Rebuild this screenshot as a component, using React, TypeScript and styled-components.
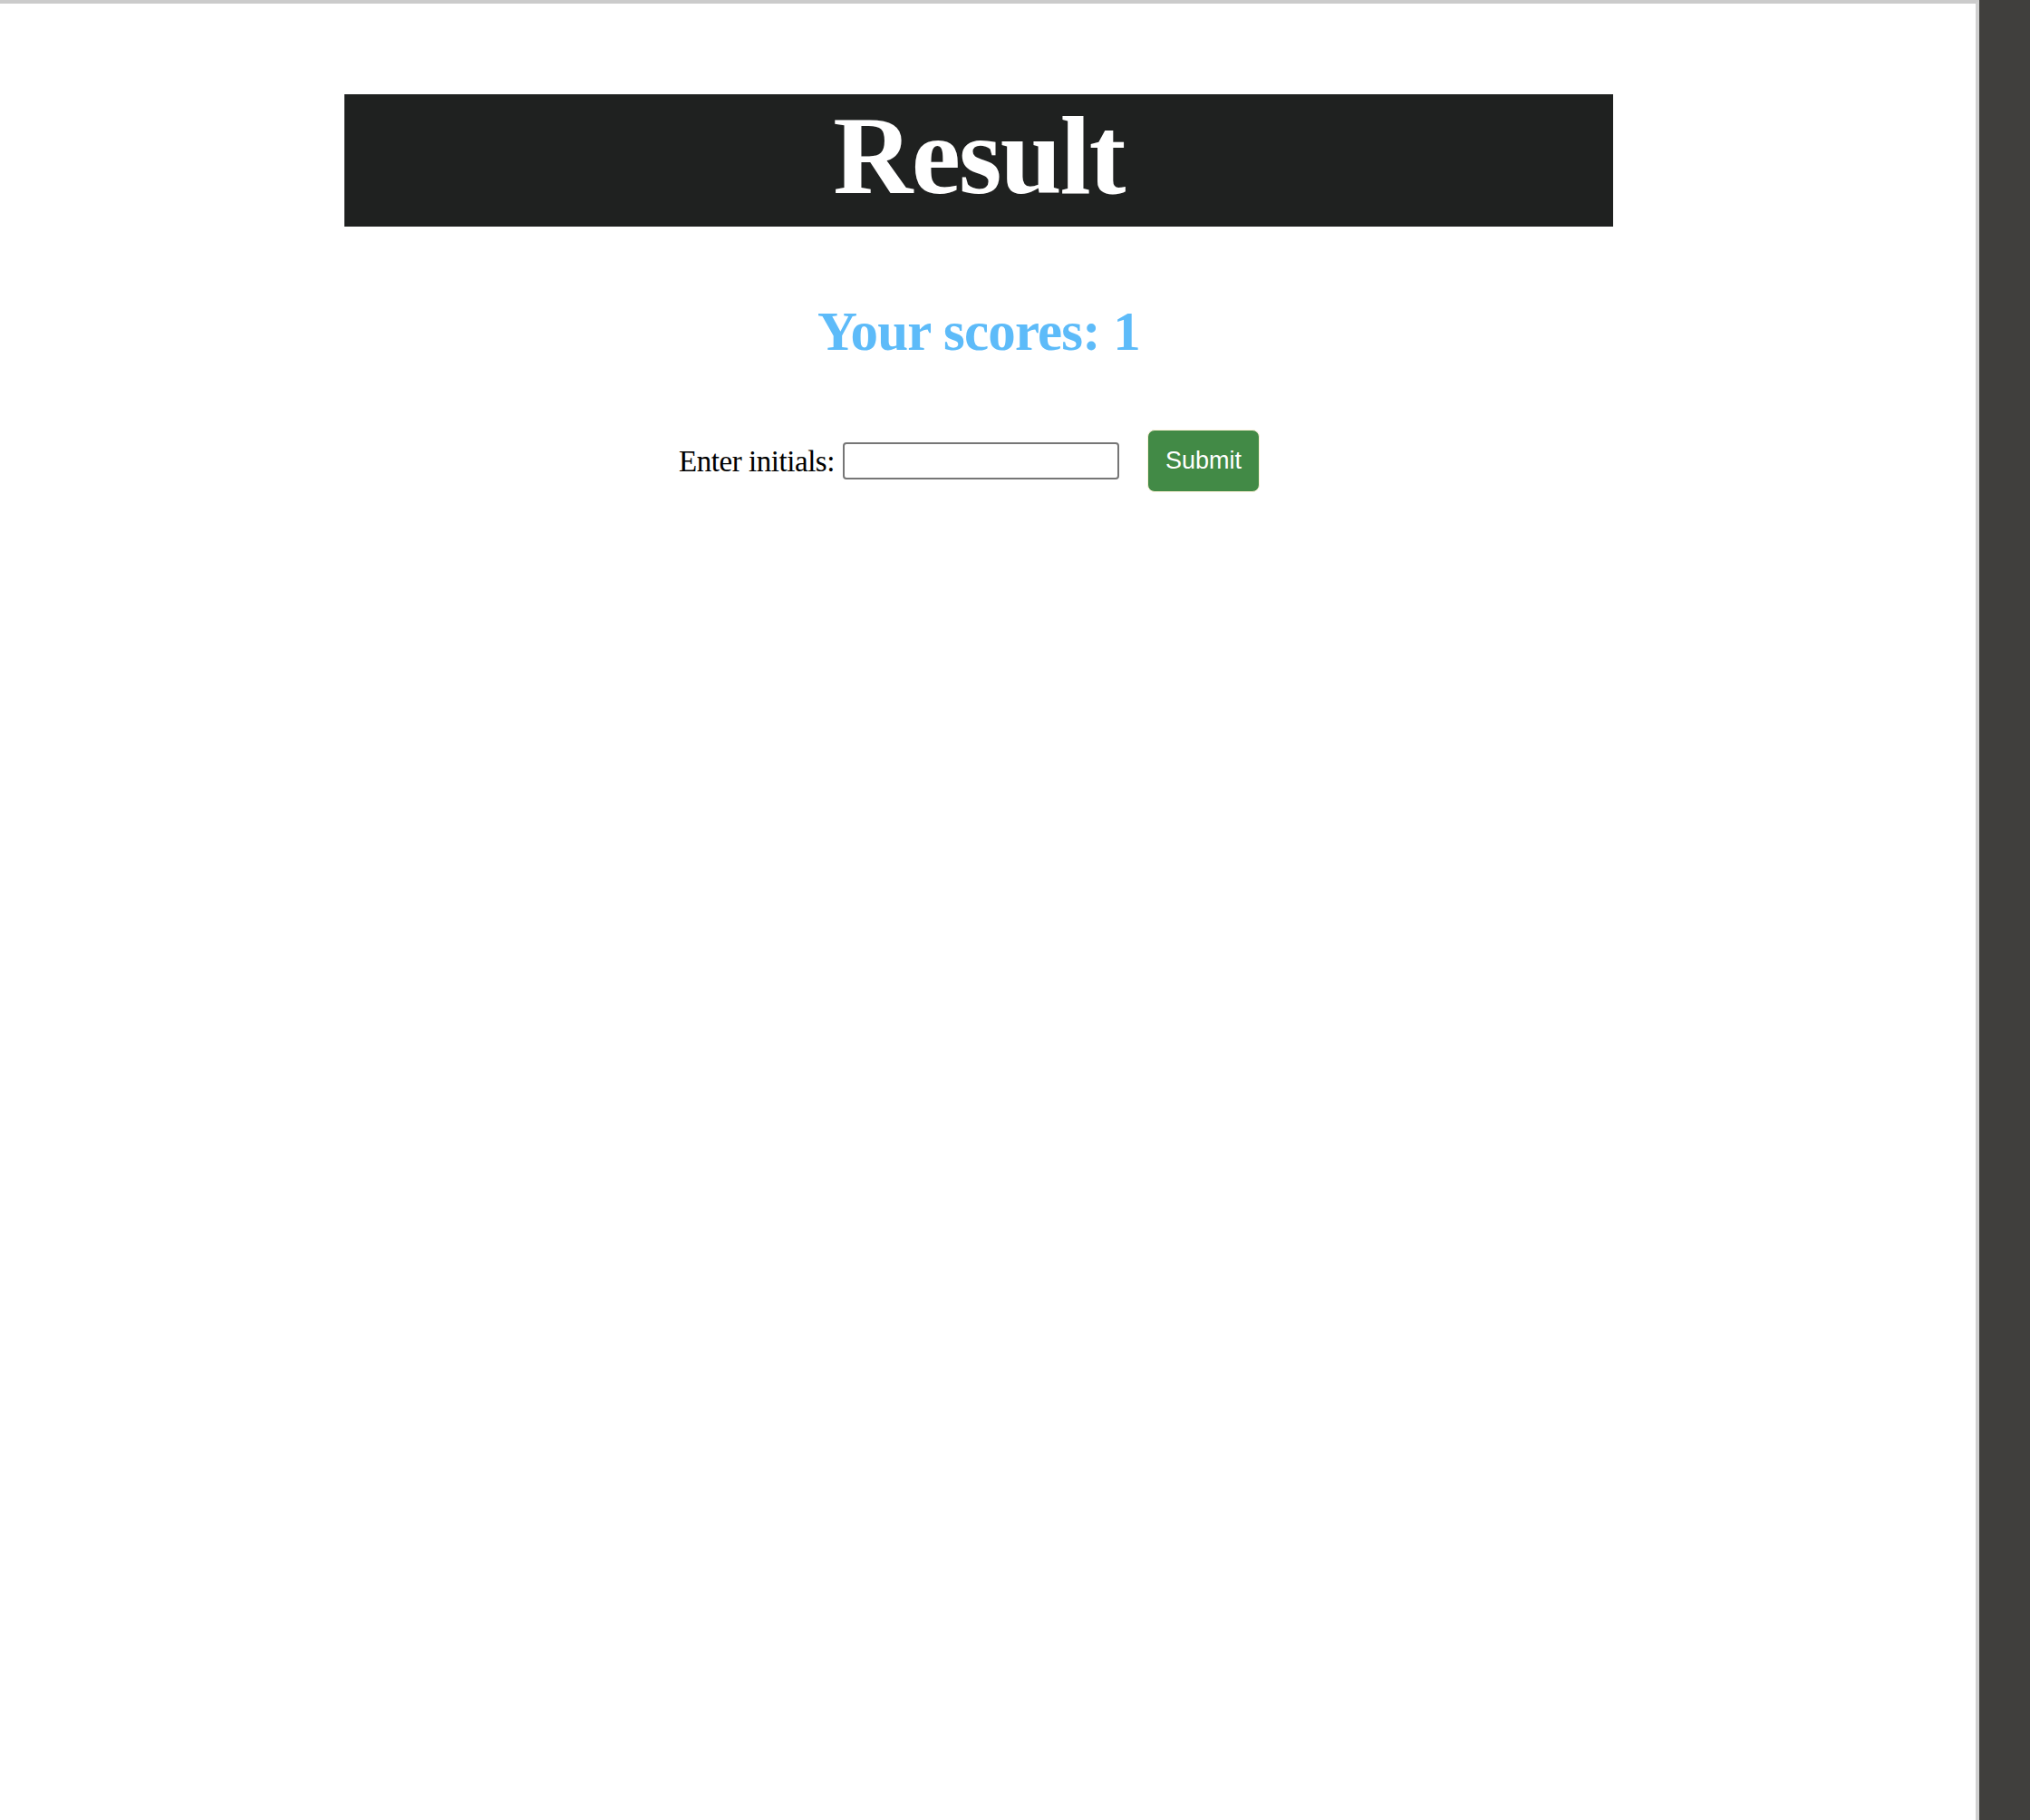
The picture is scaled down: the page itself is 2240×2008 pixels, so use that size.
import React from "react";
import styled, { createGlobalStyle } from "styled-components";

const GlobalStyle = createGlobalStyle`
  html, body {
    margin: 0;
    padding: 0;
    background: #ffffff;
  }
  body {
    font-family: "Liberation Serif", "Times New Roman", serif;
  }
`;

const Shell = styled.div`
  display: grid;
  grid-template-columns: 1fr 56px;
  height: 2008px;
  overflow: hidden;
`;

const Viewport = styled.main`
  background: #ffffff;
  border-top: 4px solid #cbcbcb;
  border-right: 4px solid #d0d0d0;
  padding-right: 20px;
`;

const SidePanel = styled.aside`
  background: #403f3d;
`;

const Container = styled.section`
  width: 1400px;
  margin: 100px auto 0;
  display: flex;
  flex-direction: column;
  align-items: stretch;
`;

const Banner = styled.h1`
  margin: 0;
  background: #1f2120;
  color: #ffffff;
  font-family: "Liberation Serif", "Times New Roman", serif;
  font-weight: 700;
  font-size: 122px;
  line-height: 136px;
  letter-spacing: -1.8px;
  text-align: center;
  padding: 0 0 10px;
`;

const Score = styled.h2`
  margin: 81px 0 0;
  color: #5dbbf9;
  font-family: "Liberation Serif", "Times New Roman", serif;
  font-weight: 700;
  font-size: 61px;
  line-height: 70px;
  letter-spacing: -0.8px;
  text-align: center;
`;

const Form = styled.form`
  margin: 73px 21px 0 0;
  display: flex;
  justify-content: center;
  align-items: center;
`;

const Label = styled.label`
  font-family: "Liberation Serif", "Times New Roman", serif;
  font-size: 33px;
  line-height: 40px;
  letter-spacing: -0.45px;
  color: #000000;
  margin-right: 9px;
`;

const TextInput = styled.input`
  box-sizing: border-box;
  width: 305px;
  height: 41px;
  border: 2px solid #767676;
  border-radius: 4px;
  background: #ffffff;
  padding: 2px 4px;
  font-size: 26px;
  margin: 0 31px 0 0;
  outline: none;
`;

const SubmitButton = styled.button`
  box-sizing: border-box;
  width: 124px;
  height: 69px;
  background: #428a46;
  color: #ffffff;
  border: 1px solid #fbf1d6;
  border-radius: 8px;
  font-family: "Liberation Sans", Arial, sans-serif;
  font-size: 27px;
  padding: 0;
  cursor: pointer;
`;

export default function App() {
  return (
    <>
      <GlobalStyle />
      <Shell>
        <Viewport>
          <Container>
            <Banner>Result</Banner>
            <Score>Your scores: 1</Score>
            <Form onSubmit={(e) => e.preventDefault()}>
              <Label htmlFor="initials">Enter initials:</Label>
              <TextInput id="initials" type="text" />
              <SubmitButton type="submit">Submit</SubmitButton>
            </Form>
          </Container>
        </Viewport>
        <SidePanel />
      </Shell>
    </>
  );
}
